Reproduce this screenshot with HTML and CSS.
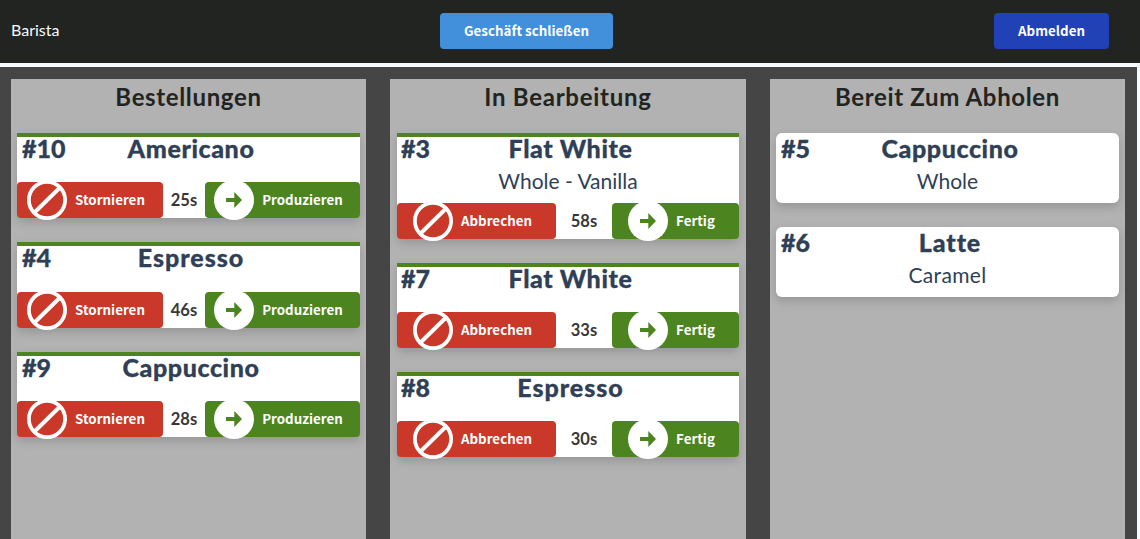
FILE: index.html
```html
<!DOCTYPE html>
<html lang="de">
<head>
<meta charset="utf-8">
<title>Barista</title>
<link rel="stylesheet" href="styles.css">
</head>
<body>
<svg class="defs" width="0" height="0">
  <symbol id="ban" viewBox="0 0 40 40"><circle cx="20" cy="20" r="18.1" fill="none" stroke="#fff" stroke-width="3.8"/><path d="M7.500 32.500 33 7.500" stroke="#fff" stroke-width="4"/></symbol>
  <symbol id="go" viewBox="0 0 40 40"><circle cx="20" cy="20" r="20" fill="#fff"/><path d="M12 18h8.300v-6L28 20l-7.700 8v-6H12z" fill="#4c8520"/></symbol>
</svg>
<header class="topbar">
  <div class="brand">Barista</div>
  <button class="btn shop"><span>Geschäft schließen</span></button>
  <div class="right"><button class="btn logout"><span>Abmelden</span></button></div>
</header>
<main class="board">
  <section class="column orders">
    <h2 class="h-orders">Bestellungen</h2>
    <article class="card active"><div class="head"><b class="num">#10</b><b class="name americano">Americano</b></div>
      <div class="actions"><button class="btn red"><svg><use href="#ban"/></svg><span>Stornieren</span></button><time>25s</time><button class="btn green"><svg><use href="#go"/></svg><span>Produzieren</span></button></div></article>
    <article class="card active"><div class="head"><b class="num">#4</b><b class="name espresso">Espresso</b></div>
      <div class="actions"><button class="btn red"><svg><use href="#ban"/></svg><span>Stornieren</span></button><time>46s</time><button class="btn green"><svg><use href="#go"/></svg><span>Produzieren</span></button></div></article>
    <article class="card active"><div class="head"><b class="num">#9</b><b class="name cappuccino">Cappuccino</b></div>
      <div class="actions"><button class="btn red"><svg><use href="#ban"/></svg><span>Stornieren</span></button><time>28s</time><button class="btn green"><svg><use href="#go"/></svg><span>Produzieren</span></button></div></article>
  </section>
  <section class="column progress">
    <h2 class="h-progress">In Bearbeitung</h2>
    <article class="card active"><div class="head tall"><b class="num">#3</b><b class="name flatwhite">Flat White</b><p class="opt vanilla">Whole - Vanilla</p></div>
      <div class="actions"><button class="btn red"><svg><use href="#ban"/></svg><span>Abbrechen</span></button><time>58s</time><button class="btn green"><svg><use href="#go"/></svg><span>Fertig</span></button></div></article>
    <article class="card active"><div class="head"><b class="num">#7</b><b class="name flatwhite">Flat White</b></div>
      <div class="actions"><button class="btn red"><svg><use href="#ban"/></svg><span>Abbrechen</span></button><time>33s</time><button class="btn green"><svg><use href="#go"/></svg><span>Fertig</span></button></div></article>
    <article class="card active"><div class="head"><b class="num">#8</b><b class="name espresso">Espresso</b></div>
      <div class="actions"><button class="btn red"><svg><use href="#ban"/></svg><span>Abbrechen</span></button><time>30s</time><button class="btn green"><svg><use href="#go"/></svg><span>Fertig</span></button></div></article>
  </section>
  <section class="column ready">
    <h2 class="h-ready">Bereit Zum Abholen</h2>
    <article class="card done"><div class="head tall"><b class="num">#5</b><b class="name cappuccino">Cappuccino</b><p class="opt whole">Whole</p></div></article>
    <article class="card done"><div class="head tall"><b class="num">#6</b><b class="name latte">Latte</b><p class="opt caramel">Caramel</p></div></article>
  </section>
</main>
</body>
</html>
```
FILE: styles.css
```css
* { box-sizing: border-box; }
body { margin: 0; height: 539px; overflow: hidden; background: #f7fafc; font-family: Lato, sans-serif; color: #2f4056; }
.defs { display: block; height: 0; }
.topbar { height: 63px; background: #222422; display: grid; grid-template-columns: 440px 173px 1fr; align-items: center; padding-bottom: 1px; }
.brand { color: #f7fafc; font-size: 16px; line-height: 22px; padding: 0 0 2px 11px; }
.right { display: flex; justify-content: flex-end; padding-right: 31px; }
.btn { border: 0; border-radius: 4px; height: 36px; padding: 0; display: flex; align-items: center; justify-content: center; color: #fff; font: 700 13.333px/20px "Noto Sans CJK SC", sans-serif; letter-spacing: 0.02px; white-space: nowrap; }
.shop { width: 173px; background: #4290dc; }
.logout { width: 115px; background: #2042b6; }
.board { margin-top: 4px; width: 1137px; height: 472px; background: #454545; padding: 12px 12px 0 11px; display: grid; grid-template-columns: 355px 356px 355px; column-gap: 24px; }
.column { background: #b2b2b2; padding: 0 6px; }
.progress { padding: 0 7px; }
h2 { margin: 0; height: 54px; font-size: 24px; line-height: 36px; font-weight: 700; letter-spacing: 0.65px; text-align: center; color: #222422; white-space: nowrap; }
.h-progress { letter-spacing: 0.75px; }
.card { margin-bottom: 24px; background: #fff; box-shadow: 0 4px 10px rgba(0,0,0,.16); }
.active { border-top: 4px solid #4c8520; border-radius: 0 0 5px 5px; }
.done { border-radius: 6px; }
.head { height: 45.33px; display: grid; grid-template-columns: 100%; grid-template-rows: 24px 1fr; }
.tall { height: 65.7px; }
.done .head { padding-top: 4px; height: 70px; }
.num, .name { grid-area: 1 / 1; font-size: 25px; line-height: 23px; font-weight: 900; white-space: nowrap; -webkit-text-stroke: 0.3px #2f4056; }
.num { padding-left: 5px; }
.progress .num { padding-left: 4px; }
.name { text-align: center; padding-left: 5px; letter-spacing: 0.6px; }
.espresso { letter-spacing: 1px; }
.latte { letter-spacing: 0.9px; }
.opt { margin: 0; padding-top: 5px; font-size: 21px; line-height: 30px; text-align: center; }
.caramel { letter-spacing: 0.35px; }
.actions { height: 36px; display: grid; grid-template-columns: 146px 42px 155px; }
.progress .actions { grid-template-columns: 159px 56px 127px; }
.actions .btn { padding-right: 8px; }
.actions .btn svg { width: 40px; height: 40px; margin-right: 8px; flex: none; overflow: visible; }
.red { background: #c93829; }
.green { background: #4c8520; }
time { font-size: 16.5px; line-height: 37px; font-weight: 700; text-align: center; color: #373737; }
```
